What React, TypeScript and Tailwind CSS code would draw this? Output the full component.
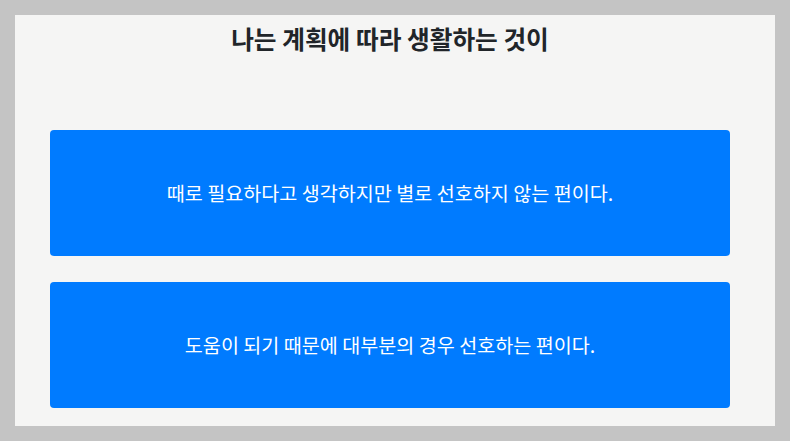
const choices = [
  '때로 필요하다고 생각하지만 별로 선호하지 않는 편이다.',
  '도움이 되기 때문에 대부분의 경우 선호하는 편이다.',
];

export default function App() {
  return (
    <div
      className="h-[441px] w-[790px] overflow-hidden bg-[#c4c4c4] pl-[15px] pt-[15px]"
      style={{fontFamily: '"Noto Sans CJK KR", "Noto Sans", sans-serif'}}
    >
      <section className="flex h-[411px] w-[760px] flex-col bg-[#f5f5f4] pl-[35px] pr-[45px] pt-[7px]">
        <h1 className="h-[33px] text-center text-[24.7px] font-bold leading-[33px] text-[#212529]">
          나는 계획에 따라 생활하는 것이
        </h1>
        <div className="mt-[75px] flex flex-col gap-[26px]">
          {choices.map((choice) => (
            <button
              className="flex h-[126px] w-full items-center justify-center rounded-[4px] bg-[#007bff] text-[19.6px] text-white"
              key={choice}
              type="button"
            >
              {choice}
            </button>
          ))}
        </div>
      </section>
    </div>
  );
}
